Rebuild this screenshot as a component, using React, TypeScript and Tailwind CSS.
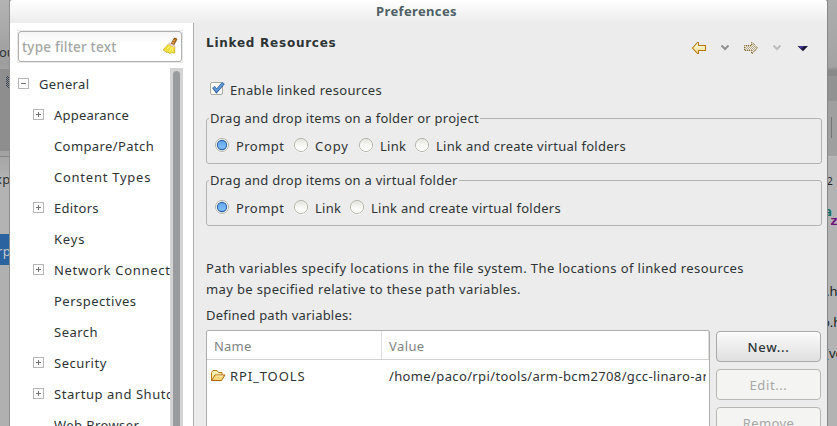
import React from "react";

function Expander({ open }: { open?: boolean }) {
  return (
    <svg width="11" height="11" viewBox="0 0 11 11" className="shrink-0" shapeRendering="crispEdges">
      <rect x="0.5" y="0.5" width="10" height="10" rx="1" fill="#fdfdfd" stroke="#b6b6b4" />
      <path d={open ? "M3 5.5h5" : "M3 5.5h5M5.5 3v5"} stroke="#707475" />
    </svg>
  );
}

function TreeRow({ label, expandable, cls }: { label: string; expandable?: boolean; cls: string }) {
  return (
    <div className="flex h-[31px] shrink-0 items-center pl-[23px]">
      <div className="w-[21px] shrink-0 pb-[2px]">{expandable && <Expander />}</div>
      <span className={"whitespace-nowrap " + cls}>{label}</span>
    </div>
  );
}

function Radio({ label, on, cls, width }: { label: string; on?: boolean; cls: string; width: string }) {
  return (
    <div className={"flex h-[22px] shrink-0 items-center " + width}>
      <svg width="16" height="16" viewBox="0 0 16 16" className="mr-[6px] -mt-[5px] shrink-0">
        <circle cx="8" cy="8.5" r="7" fill="#fff" />
        <circle cx="8" cy="8" r="6.6" fill={on ? "#f4f3ed" : "url(#radioOff)"} stroke="#b0b1a6" strokeWidth="0.9" />
        {on && <circle cx="8" cy="8" r="4.600" fill="url(#radioOn)" stroke="#2b62aa" strokeWidth="1.1" />}
      </svg>
      <span className={"whitespace-nowrap " + cls}>{label}</span>
    </div>
  );
}

function Group({ title, cls, children }: { title: string; cls: string; children: React.ReactNode }) {
  return (
    <fieldset className="relative h-[46px] w-[616px] rounded-[3px] border border-[#b2b4b2] pt-[17px] pl-[7px]">
      <div className={"absolute -top-[11px] left-[2px] h-[20px] whitespace-nowrap bg-[#ececec] px-[1px] leading-[20px] " + cls}>{title}</div>
      <div className="flex">{children}</div>
    </fieldset>
  );
}

function LeftBackdrop() {
  return (
    <div className="flex h-full w-[10px] shrink-0 flex-col overflow-hidden border-r border-[#8f8f8f] bg-[#b0b0b0]">
      <div className="h-[65px] shrink-0 bg-linear-to-b from-[#b4b4b4] to-[#9c9c9c] pt-[42px] leading-[20px]"><span className="-ml-[1px]">ou</span></div>
      <div className="h-[4px] shrink-0 bg-[#a0a0a0]" />
      <div className="h-[82px] shrink-0 bg-[#8e8e8e] pt-[7px] pl-[6px]">
        <svg width="3" height="12" viewBox="0 0 3 12" shapeRendering="crispEdges">
          <path d="M.5 1v10M1.500 0v12M2.500 1v12" stroke="#3c4654" strokeWidth="1" strokeDasharray="1 1" />
        </svg>
      </div>
      <div className="h-[6px] shrink-0 border-b border-[#858585] bg-[#a2a2a2]" />
      <div className="h-[77px] shrink-0 bg-linear-to-b from-[#a6a6a6] to-[#b3b3b3] to-30% pt-[12px] leading-[20px]">
        <span className="-ml-[5px] tracking-[0.4px]">xp</span>
      </div>
      <div className="h-[31px] shrink-0 bg-[#2b62a0] leading-[34px] text-[#c8c8c8]"><span className="-ml-[3px] tracking-[0.4px]">rp</span></div>
    </div>
  );
}

function RightBackdrop() {
  return (
    <div className="flex h-full w-[10px] shrink-0 flex-col overflow-hidden border-l border-[#888] bg-[#b3b3b3] text-[#202425]">
      <div className="h-[67px] shrink-0 bg-linear-to-b from-[#aeaeae] to-[#a2a2a2]" />
      <div className="h-[9px] shrink-0 bg-linear-to-b from-[#a0a0a0] to-[#888] to-40%" />
      <div className="h-[25px] shrink-0 bg-[#929292]" />
      <div className="h-[56px] shrink-0 border-b border-[#b8b8b8] bg-[#9f9f9f] pt-[16px] pl-[3px]">
        <div className="h-[21px] w-px bg-[#747474]" />
      </div>
      <div className="mt-[16px] h-[16px] shrink-0 text-[10px] leading-[16px]"><span className="-ml-px">2</span></div>
      <div className="mt-[16px] h-[13px] shrink-0 font-['DejaVu_Sans_Mono',monospace] text-[13px] leading-[13px] font-bold text-[#177065]"><span className="-ml-[4px]">a</span></div>
      <div className="mt-[-4px] ml-[2px] h-[13px] shrink-0 font-['DejaVu_Sans_Mono',monospace] text-[13px] leading-[13px] font-bold text-[#71117b]">z</div>
      <div className="mt-[54px] h-[20px] shrink-0 leading-[20px]"><span className="-ml-[2px]">.h</span></div>
      <div className="mt-[11px] h-[20px] shrink-0 leading-[20px]"><span className="-ml-[6px]">o.h</span></div>
      <div className="mt-[11px] h-[20px] shrink-0 leading-[20px]"><span className="-ml-[3px]">(vo</span></div>
    </div>
  );
}

function Broom() {
  return (
    <svg width="16" height="18" viewBox="0 0 16 18" className="-mt-[2px] shrink-0">
      <path d="M9 7 12 1.5Q14.3 .2 14.8 2.5L11.8 8Z" fill="#b87822" stroke="#70420f" strokeWidth=".8" />
      <path d="m10 5 2 1M11 3l2 1" stroke="#e2aa51" />
      <path d="M6.500 7Q4 10 1 12.800L3 14 4 15.300 6 15 7.500 16.500 9.500 15.700 12.800 16Q12.500 12 13 9.500Z" fill="#f0df38" stroke="#c9ae23" strokeWidth=".8" />
      <path d="m5 12 3-3m-1 6 3-5m0 5 1-5" stroke="#fff17b" />
      <path d="m6.500 6.500 6.500 3" stroke="#e7c7bd" strokeWidth="2" />
    </svg>
  );
}

function Toolbar() {
  return (
    <svg width="118" height="14" viewBox="691 41 118 14" className="shrink-0">
      <defs>
        <linearGradient id="gold" x2="0" y2="1"><stop stopColor="#fffdf0" /><stop offset="1" stopColor="#f5dc83" /></linearGradient>
        <pattern id="dither" width="2" height="2" patternUnits="userSpaceOnUse">
          <rect width="2" height="2" fill="#eeeade" /><rect width="1" height="1" fill="#b5ab8e" /><rect x="1" y="1" width="1" height="1" fill="#b5ab8e" />
        </pattern>
      </defs>
      <path d="m692.500 48 5-5.500h1V45.500h7v5h-7v3h-1z" fill="url(#gold)" stroke="#b77a0b" strokeWidth="1.1" />
      <path d="m757.500 48-5-5.500h-1V45.500h-7v5h7v3h1z" fill="url(#dither)" stroke="#80651f" strokeWidth="1" strokeDasharray="1 1" />
      <path d="m721.500 45.500 3.500 3.500 3.500-3.500" fill="none" stroke="#8f8f8f" strokeWidth="2" />
      <path d="m773.500 45.500 3.500 3.500 3.500-3.500" fill="none" stroke="#bdbdbd" strokeWidth="2" />
      <path d="M797.500 46h10.500l-5 5.200z" fill="#1c1a38" />
      <path d="M798 46h6l-3 3z" fill="#43389a" />
    </svg>
  );
}

function Folder() {
  return (
    <svg width="16" height="14" viewBox="0 0 16 14" className="mr-[4px] shrink-0">
      <path d="M1.500 11.500V3.500l1.500-2h4l1.500 2h3.500v3" fill="#fff0ae" stroke="#b8791a" />
      <path d="m1.500 11.500 3.500-5.500h10l-3.500 5.500z" fill="#fbd778" stroke="#ac650e" />
      <path d="M5.500 7h7.500" stroke="#fff1b8" />
    </svg>
  );
}

function Button({ label, disabled, cls }: { label: string; disabled?: boolean; cls: string }) {
  return (
    <button className={"h-[31px] w-[105px] shrink-0 rounded-[4px] border pt-[2px] leading-[27px] " + (disabled ? "border-[#b7b8b4] bg-[#f4f4f2] text-[#a6a8a7] " : "border-[#a9aaa7] bg-linear-to-b from-[#fbfbfb] to-[#dfdfdf] font-medium text-[#2e3436] shadow-[inset_0_1px_0_#fff] ") + cls}>
      {label}
    </button>
  );
}

export default function App() {
  return (
    <div className="flex h-[426px] w-[837px] overflow-hidden bg-[#a9a9a9] font-['Noto_Sans',sans-serif] text-[13px] text-[#2e3436]">
      <svg width="0" height="0" className="absolute">
        <defs>
          <linearGradient id="radioOff" x2="0" y2="1"><stop stopColor="#e2e2db" /><stop offset=".6" stopColor="#fbfbf9" /><stop offset="1" stopColor="#fff" /></linearGradient>
          <linearGradient id="radioOn" x2="0" y2="1"><stop stopColor="#63a5ee" /><stop offset="1" stopColor="#83c0ff" /></linearGradient>
        </defs>
      </svg>
      <LeftBackdrop />
      <main className="flex h-full w-[817px] shrink-0 flex-col overflow-hidden rounded-t-[3px] bg-[#ececec]">
        <header className="h-[23px] shrink-0 bg-linear-to-b from-white to-[#ececec] text-center leading-[22px] font-bold text-[#4f5f66]">
          <span className="-ml-[4px] tracking-[0.35px]">Preferences</span>
        </header>
        <div className="flex min-h-0 flex-1">
          <aside className="flex w-[184px] shrink-0 flex-col border-r border-[#acaeac] bg-white pt-[7px]">
            <div className="ml-[7px] flex h-[33px] w-[166px] shrink-0 border border-[#e9e9e8]">
              <div className="flex h-[31px] w-[164px] items-center justify-between rounded-[3px] border border-[#b0b1ae] bg-linear-to-b from-[#f5f5f5] to-white to-40% pr-[3px] pl-[3px]">
                <span className="pt-[2px] text-[13.5px] font-medium tracking-[0.2px] text-[#a5a7a5]">type filter text</span>
                <Broom />
              </div>
            </div>
            <div className="mt-[5px] flex min-h-0 flex-1">
              <div className="flex w-[160px] shrink-0 flex-col overflow-hidden">
                <div className="flex h-[32px] shrink-0 items-center pl-[8px]">
                  <div className="w-[21px] pb-[2px]"><Expander open /></div><span className="pt-px tracking-[0.35px]">General</span>
                </div>
                <TreeRow label="Appearance" expandable cls="tracking-[0.2px]" />
                <TreeRow label="Compare/Patch" cls="tracking-[0.4px]" />
                <TreeRow label="Content Types" cls="tracking-[0.75px]" />
                <TreeRow label="Editors" expandable cls="tracking-[0.3px]" />
                <TreeRow label="Keys" cls="tracking-[0.8px]" />
                <TreeRow label="Network Connections" expandable cls="tracking-[0.7px]" />
                <TreeRow label="Perspectives" cls="tracking-[0.5px]" />
                <TreeRow label="Search" cls="tracking-[0.5px]" />
                <TreeRow label="Security" expandable cls="tracking-[0.5px]" />
                <TreeRow label="Startup and Shutdown" expandable cls="tracking-[0.55px]" />
                <TreeRow label="Web Browser" cls="tracking-[0.4px]" />
              </div>
              <div className="w-[13px] bg-[#d3d3d3] pt-[3px] pl-[3px]"><div className="h-full w-[7px] rounded-t-full bg-[#9a9b9d]" /></div>
            </div>
          </aside>
          <section className="min-w-0 flex-1 overflow-hidden pl-[12px]">
            <div className="flex h-[50px] items-start justify-between pt-[9px] pr-[18px]">
              <h1 className="pt-px font-['DejaVu_Sans',sans-serif] text-[12px] leading-[20px] font-bold tracking-[0.75px]">Linked Resources</h1>
              <div className="mt-[9px]"><Toolbar /></div>
            </div>
            <div className="flex h-[34px] items-center">
              <svg width="17" height="15" viewBox="0 0 17 15" className="mr-[3px] ml-[4px] -mt-[3px]">
                <rect x="0.500" y="1.500" width="12" height="12" rx="1.500" fill="#fbfbf8" stroke="#a8aaa1" />
                <path d="m3.500 6 3 4L13.500 2" fill="none" stroke="#2b5c9b" strokeWidth="3.400" />
                <path d="m3.700 6.200 2.800 3.500L13.200 2.300" fill="none" stroke="#629bda" strokeWidth="1.900" />
              </svg>
              <span className="pt-[2px] tracking-[0.33px]">Enable linked resources</span>
            </div>
            <div className="mt-[11px]">
              <Group title="Drag and drop items on a folder or project" cls="tracking-[0.25px]">
                <Radio label="Prompt" on cls="tracking-[0.45px]" width="w-[79px]" />
                <Radio label="Copy" cls="tracking-[0.8px]" width="w-[65px]" />
                <Radio label="Link" cls="tracking-[0.3px]" width="w-[56px]" />
                <Radio label="Link and create virtual folders" cls="tracking-[0.28px]" width="w-[220px]" />
              </Group>
            </div>
            <div className="mt-[16px]">
              <Group title="Drag and drop items on a virtual folder" cls="tracking-[0.25px]">
                <Radio label="Prompt" on cls="tracking-[0.45px]" width="w-[79px]" />
                <Radio label="Link" cls="tracking-[0.3px]" width="w-[56px]" />
                <Radio label="Link and create virtual folders" cls="tracking-[0.28px]" width="w-[220px]" />
              </Group>
            </div>
            <p className="mt-[32px] leading-[21px] whitespace-nowrap">
              <span className="tracking-[0.4px]">Path variables specify locations in the file system. The locations of linked resources</span><br />
              <span className="tracking-[0.36px]">may be specified relative to these path variables.</span>
            </p>
            <p className="mt-[5px] leading-[21px] tracking-[0.22px]">Defined path variables:</p>
            <div className="mt-[4px] flex">
              <div className="h-[110px] w-[504px] shrink-0 rounded-t-[2px] border border-[#abaeab] bg-white">
                <div className="flex h-[29px] border-b border-[#d2d2d0] leading-[30px] text-[#808485]">
                  <div className="w-[175px] border-r border-[#dededc] pl-[7px] tracking-[0.2px]">Name</div>
                  <div className="flex-1 border-r border-[#dededc] pl-[7px] tracking-[0.4px]">Value</div>
                </div>
                <div className="flex h-[32px] items-center">
                  <div className="flex w-[182px] shrink-0 items-center pl-[3px]"><Folder /><span className="pt-px tracking-[0.9px]">RPI_TOOLS</span></div>
                  <div className="w-[317px] overflow-hidden pt-px tracking-[0.37px] whitespace-nowrap">/home/paco/rpi/tools/arm-bcm2708/gcc-linaro-arm-linux</div>
                </div>
              </div>
              <div className="ml-[6px] flex flex-col gap-[7px] pt-px">
                <Button label="New..." cls="tracking-[0.7px]" />
                <Button label="Edit..." disabled cls="tracking-[0.6px]" />
                <Button label="Remove" disabled cls="tracking-[0.4px]" />
              </div>
            </div>
          </section>
        </div>
      </main>
      <RightBackdrop />
    </div>
  );
}
